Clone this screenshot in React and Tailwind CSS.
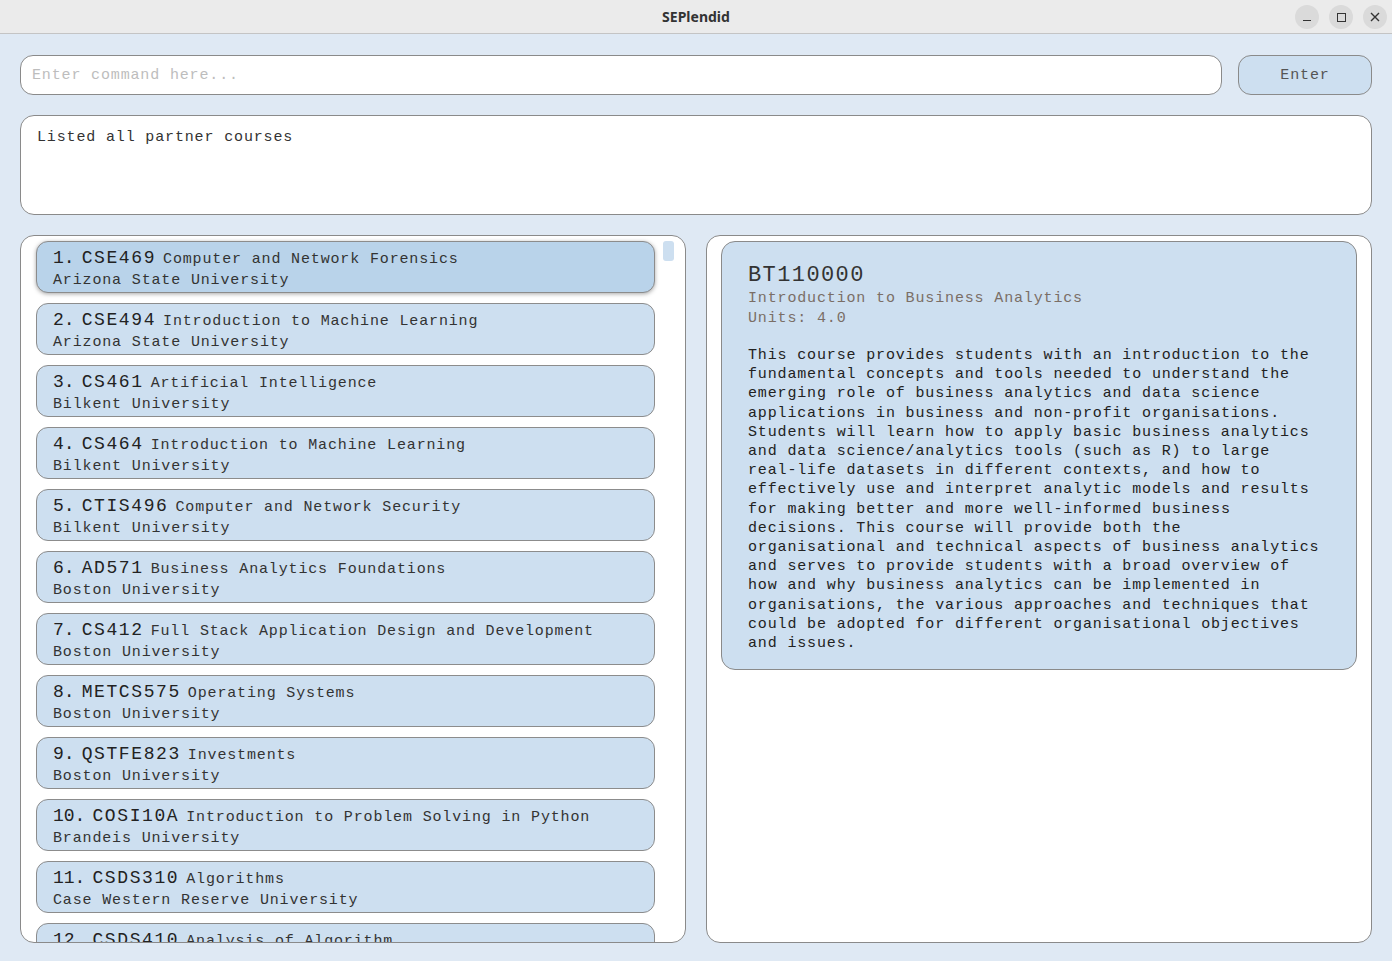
import React from 'react';

const mono = { fontFamily: '"Liberation Mono", "DejaVu Sans Mono", monospace' };

const courses = [
  ['CSE469', 'Computer and Network Forensics', 'Arizona State University'],
  ['CSE494', 'Introduction to Machine Learning', 'Arizona State University'],
  ['CS461', 'Artificial Intelligence', 'Bilkent University'],
  ['CS464', 'Introduction to Machine Learning', 'Bilkent University'],
  ['CTIS496', 'Computer and Network Security', 'Bilkent University'],
  ['AD571', 'Business Analytics Foundations', 'Boston University'],
  ['CS412', 'Full Stack Application Design and Development', 'Boston University'],
  ['METCS575', 'Operating Systems', 'Boston University'],
  ['QSTFE823', 'Investments', 'Boston University'],
  ['COSI10A', 'Introduction to Problem Solving in Python', 'Brandeis University'],
  ['CSDS310', 'Algorithms', 'Case Western Reserve University'],
  ['CSDS410', 'Analysis of Algorithm', 'Case Western Reserve University'],
];

const CourseItem = ({ index, code, title, school, selected }) => (
  <div
    className={`shrink-0 h-[52px] rounded-[12px] border border-[#8c8c8c] px-4 pt-[3px] ${
      selected ? 'bg-[#b9d3ea] shadow-[0_1px_4px_rgba(0,0,0,0.35)]' : 'bg-[#cddff0]'
    }`}
  >
    <div className="flex items-baseline text-[#222] h-[25px] whitespace-nowrap">
      <span className="text-[18px]">{index}.</span>
      <span className="text-[18px] tracking-[1.6px] ml-[7px] mr-[7px]">{code}</span>
      <span className="text-[15px] tracking-[0.85px] text-[#333]">{title}</span>
    </div>
    <div className="text-[15px] tracking-[0.85px] text-[#333] leading-[22px]">{school}</div>
  </div>
);

const App = () => {
  return (
    <div className="w-[1392px] h-[961px] flex flex-col bg-[#dfe9f4] overflow-hidden" style={mono}>
      <div className="h-[34px] shrink-0 bg-[#ebebeb] border-b border-[#c4c4c4] flex items-center justify-center relative">
        <span className="text-[14px] font-bold text-[#333]" style={{ fontFamily: '"Noto Sans", sans-serif' }}>SEPlendid</span>
        <div className="absolute right-[5px] top-[5px] flex gap-[10px]">
          <div className="w-[24px] h-[24px] rounded-full bg-[#dadada] flex items-center justify-center">
            <div className="w-[8px] h-[1px] bg-[#333] mt-[6px]" />
          </div>
          <div className="w-[24px] h-[24px] rounded-full bg-[#dadada] flex items-center justify-center">
            <div className="w-[9px] h-[9px] border border-[#333]" />
          </div>
          <div className="w-[24px] h-[24px] rounded-full bg-[#dadada] flex items-center justify-center">
            <svg width="10" height="10" viewBox="0 0 10 10">
              <path d="M1 1L9 9M9 1L1 9" stroke="#333" strokeWidth="1.4" />
            </svg>
          </div>
        </div>
      </div>

      <div className="flex-1 flex flex-col px-[20px] pt-[21px] pb-[18px] gap-[20px] min-h-0">
        <div className="flex gap-[16px] h-[40px] shrink-0">
          <div className="flex-1 bg-white border border-[#8a8a8a] rounded-[13px] flex items-center px-[11px] pt-[3px]">
            <span className="text-[15px] tracking-[0.85px] text-[#bdbdbd]">Enter command here...</span>
          </div>
          <div className="w-[134px] bg-[#cddff0] border border-[#8a8a8a] rounded-[13px] flex items-center justify-center pt-[3px]">
            <span className="text-[15px] tracking-[0.85px] text-[#555]">Enter</span>
          </div>
        </div>

        <div className="h-[100px] shrink-0 bg-white border border-[#8a8a8a] rounded-[14px] px-[16px] pt-[9px]">
          <span className="text-[15px] tracking-[0.85px] text-[#333]">Listed all partner courses</span>
        </div>

        <div className="flex-1 grid grid-cols-2 gap-[20px] min-h-0">
          <div className="bg-white border border-[#8a8a8a] rounded-[14px] relative overflow-hidden flex">
            <div className="flex-1 flex flex-col gap-[10px] pl-[15px] pr-[30px] pt-[5px] overflow-hidden">
              {courses.map((c, i) => (
                <CourseItem key={c[0]} index={i + 1} code={c[0]} title={c[1]} school={c[2]} selected={i === 0} />
              ))}
            </div>
            <div className="absolute right-[11px] top-[5px] w-[11px] h-[20px] rounded-[3px] bg-[#cddff0]" />
          </div>

          <div className="bg-white border border-[#8a8a8a] rounded-[14px] px-[14px] pt-[5px]">
            <div className="bg-[#cddff0] border border-[#8a8a8a] rounded-[14px] pl-[26px] pr-[28px] pt-[21px] pb-[16px]">
              <div className="text-[22px] tracking-[1.4px] text-[#333] leading-[26px]">BT110000</div>
              <div className="text-[15px] tracking-[0.85px] text-[#7a6e66] leading-[20px]">Introduction to Business Analytics</div>
              <div className="text-[15px] tracking-[0.85px] text-[#7a6e66] leading-[20px]">Units: 4.0</div>
              <p className="mt-[17px] text-[15px] tracking-[0.85px] text-[#222] leading-[19.2px]">
                This course provides students with an introduction to the fundamental concepts and tools needed to
                understand the emerging role of business analytics and data science applications in business and{' '}
                <span className="whitespace-nowrap">non-profit</span> organisations. Students will learn how to apply
                basic business analytics and data science/analytics tools (such as R) to large{' '}
                <span className="whitespace-nowrap">real-life</span> datasets in different contexts, and how to
                effectively use and interpret analytic models and results for making better and more{' '}
                <span className="whitespace-nowrap">well-informed</span> business decisions. This course will provide
                both the organisational and technical aspects of business analytics and serves to provide students with
                a broad overview of how and why business analytics can be implemented in organisations, the various
                approaches and techniques that could be adopted for different organisational objectives and issues.
              </p>
            </div>
          </div>
        </div>
      </div>
    </div>
  );
};

export default App;
